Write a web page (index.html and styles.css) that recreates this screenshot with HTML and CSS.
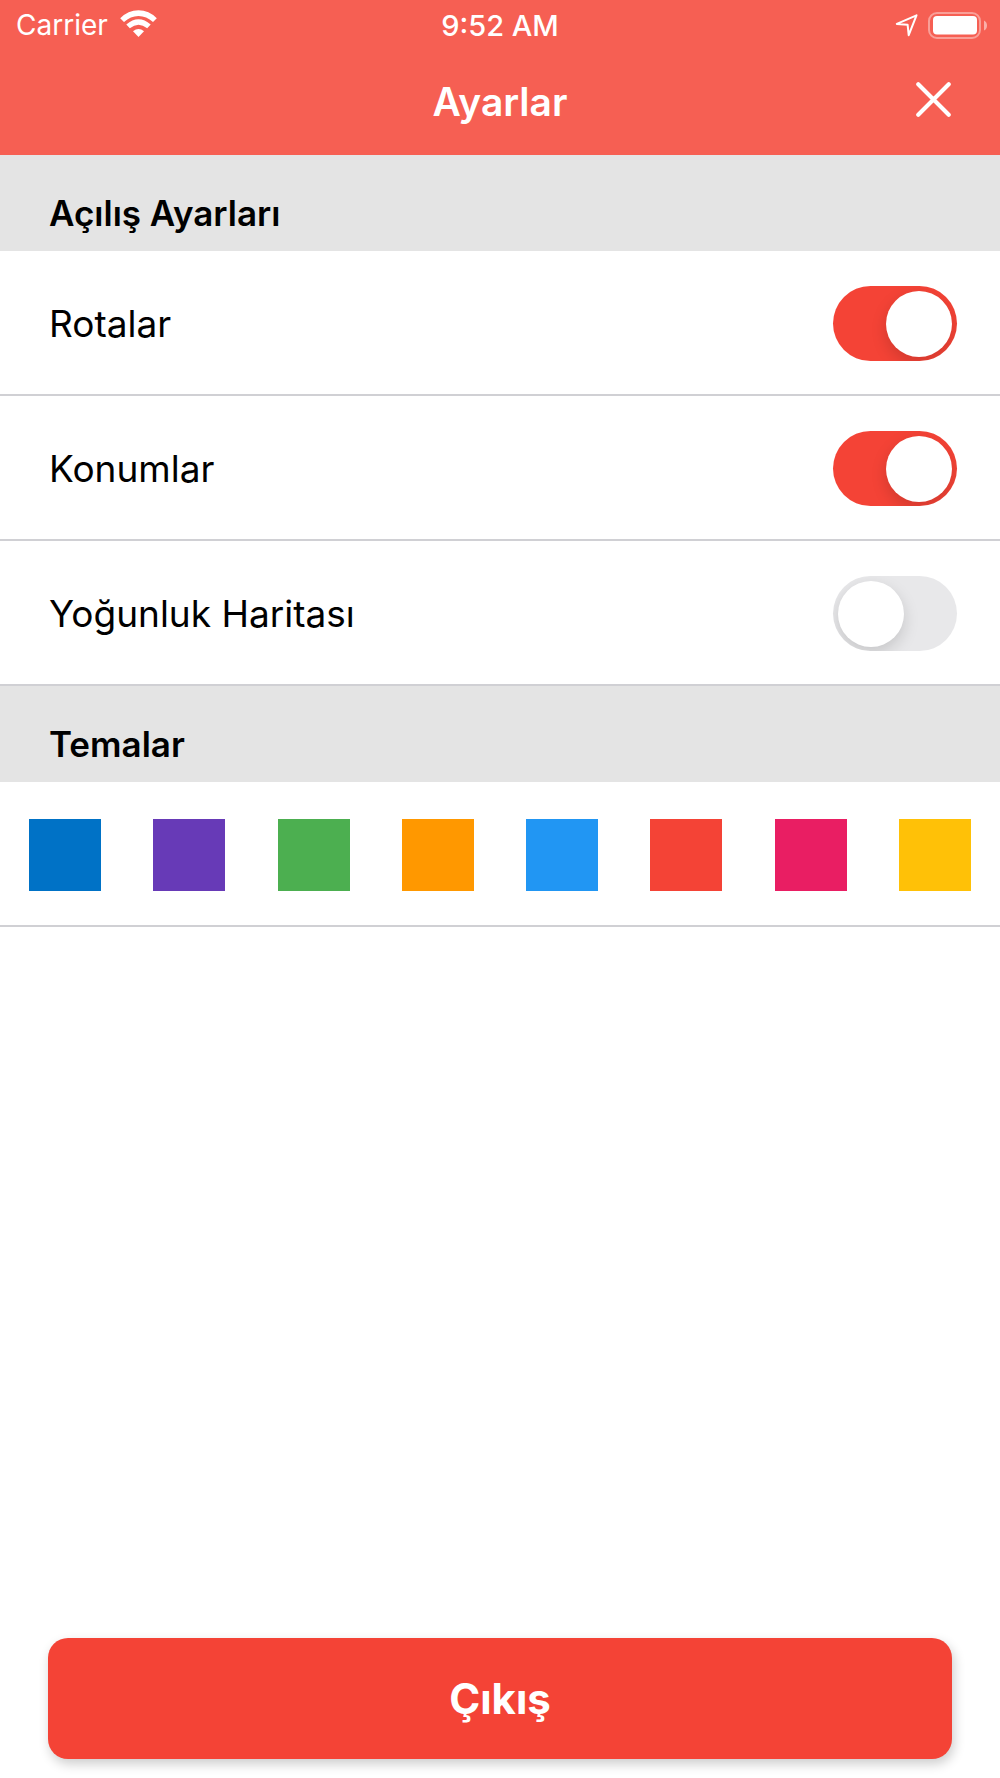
FILE: index.html
```html
<!DOCTYPE html>
<html lang="tr">
<head>
<meta charset="utf-8">
<meta name="viewport" content="width=device-width, initial-scale=1">
<title>Ayarlar</title>
<link rel="stylesheet" href="styles.css">
</head>
<body>
<div class="screen">
  <header class="header">
    <div class="status">
      <div class="status-left">
        <span>Carrier</span>
        <svg class="wifi" viewBox="0 0 37 27" aria-hidden="true">
          <path d="M18.5 27 L13 21.2 Q18.500 17 24 21.2 Z"/>
          <path d="M6.300 14.600 Q18.500 3.800 30.700 14.600 L27.200 18.200 Q18.500 11.200 9.800 18.200 Z"/>
          <path d="M0.200 8.200 Q8 0.200 18.500 0.200 Q29 0.200 36.800 8.200 L33 12 Q26.500 5.900 18.500 5.900 Q10.500 5.900 4 12 Z"/>
        </svg>
      </div>
      <span class="time">9:52 AM</span>
      <div class="status-right">
        <svg class="location" viewBox="0 0 24 24" aria-hidden="true">
          <path d="M21.500 2.300 L1.800 10.900 L12.600 11.700 L13.700 22.200 Z"/>
        </svg>
        <svg class="battery" viewBox="0 0 60 27" aria-hidden="true">
          <rect class="battery-case" x="1" y="1" width="51" height="25" rx="8"/>
          <rect x="5" y="4" width="44" height="18.500" rx="4"/>
          <path class="battery-tip" d="M56 8.500 Q59 10 59 13.500 Q59 17 56 18.500 Z"/>
        </svg>
      </div>
    </div>
    <div class="nav">
      <h1 class="title">Ayarlar</h1>
      <button class="close" type="button" aria-label="Kapat">
        <svg class="close-icon" viewBox="0 0 34 34" aria-hidden="true"><path d="M2.200 2.200 L31.800 31.800 M31.800 2.200 L2.200 31.800"/></svg>
      </button>
    </div>
  </header>
  <main class="content">
    <h2 class="section">Açılış Ayarları</h2>
    <label class="row">Rotalar<input class="switch" type="checkbox" role="switch" checked></label>
    <label class="row">Konumlar<input class="switch" type="checkbox" role="switch" checked></label>
    <label class="row">Yoğunluk Haritası<input class="switch" type="checkbox" role="switch"></label>
    <h2 class="section" id="themes">Temalar</h2>
    <div class="themes" role="radiogroup" aria-labelledby="themes">
      <input class="swatch blue" type="radio" name="theme" aria-label="Mavi">
      <input class="swatch purple" type="radio" name="theme" aria-label="Mor">
      <input class="swatch green" type="radio" name="theme" aria-label="Yeşil">
      <input class="swatch orange" type="radio" name="theme" aria-label="Turuncu">
      <input class="swatch sky" type="radio" name="theme" aria-label="Açık mavi">
      <input class="swatch red" type="radio" name="theme" aria-label="Kırmızı" checked>
      <input class="swatch pink" type="radio" name="theme" aria-label="Pembe">
      <input class="swatch amber" type="radio" name="theme" aria-label="Sarı">
    </div>
  </main>
  <footer class="footer">
    <button class="logout" type="button">Çıkış</button>
  </footer>
</div>
</body>
</html>
```
FILE: styles.css
```css
* {
  box-sizing: border-box;
}

body {
  margin: 0;
  background: #fff;
  color: #000;
  font-family: Inter, "Liberation Sans", sans-serif;
}

.screen {
  display: flex;
  flex-direction: column;
  min-height: 100vh;
}

.header {
  background: #f65f53;
  color: #fff;
}

.status {
  display: grid;
  grid-template-columns: 1fr auto 1fr;
  align-items: center;
  height: 50px;
  padding: 0 12px;
  font-size: 28px;
}

.status-left,
.status-right {
  display: flex;
  align-items: center;
  gap: 12px;
}

.status-left {
  padding-left: 4px;
}

.status-right {
  justify-content: flex-end;
  gap: 9px;
}

.time {
  font-size: 29px;
  font-weight: 500;
}

.wifi {
  width: 37px;
  height: 27px;
  margin-bottom: 3px;
  fill: #fff;
}

.location {
  width: 24px;
  height: 24px;
  fill: none;
  stroke: #fff;
  stroke-width: 2;
  stroke-linejoin: round;
}

.battery {
  width: 60px;
  height: 27px;
  fill: #fff;
}

.battery-case {
  fill: none;
  stroke: #fff;
  stroke-width: 2;
  opacity: 0.4;
}

.battery-tip {
  opacity: 0.5;
}

.nav {
  display: grid;
  grid-template-columns: 1fr auto 1fr;
  align-items: center;
  height: 105px;
  padding: 0 40px 2px;
}

.title {
  grid-column: 2;
  margin: 0;
  font-size: 39px;
  font-weight: 600;
}

.close {
  display: flex;
  justify-self: end;
  padding: 8px 9px 12px;
  border: 0;
  background: none;
}

.close-icon {
  width: 35px;
  height: 35px;
  fill: none;
  stroke: #fff;
  stroke-width: 4;
  stroke-linecap: round;
}

.section {
  display: flex;
  align-items: center;
  height: 96px;
  margin: 0;
  padding: 20px 49px 0;
  background: #e4e4e4;
  font-size: 35px;
  font-weight: 600;
}

.row {
  display: flex;
  align-items: center;
  justify-content: space-between;
  height: 145px;
  padding: 2px 43px 0 49px;
  border-bottom: 2px solid #d0d0d4;
  font-size: 37px;
}

.switch {
  display: flex;
  width: 124px;
  height: 75px;
  margin: 0;
  padding: 5px;
  border-radius: 38px;
  overflow: hidden;
  background: #e8e8ea;
  appearance: none;
}

.switch::before {
  content: "";
  width: 66px;
  height: 66px;
  border-radius: 50%;
  background: #fff;
  box-shadow: 0 6px 16px rgba(0, 0, 0, 0.15);
}

.switch:checked {
  justify-content: flex-end;
  background: #f44336;
}

.themes {
  display: flex;
  align-items: center;
  justify-content: space-between;
  height: 145px;
  padding: 2px 29px 0;
  border-bottom: 2px solid #d0d0d4;
}

.swatch {
  width: 72px;
  height: 72px;
  margin: 0;
  appearance: none;
}

.blue { background: #0072c6; }
.purple { background: #673ab7; }
.green { background: #4caf50; }
.orange { background: #ff9800; }
.sky { background: #2196f3; }
.red { background: #f44336; }
.pink { background: #e91e63; }
.amber { background: #ffc107; }

.footer {
  display: flex;
  margin-top: auto;
  padding: 19px 48px;
}

.logout {
  flex: 1;
  height: 121px;
  border: 0;
  border-radius: 20px;
  background: #f44336;
  box-shadow: 2px 5px 12px rgba(0, 0, 0, 0.2);
  color: #fff;
  font-family: inherit;
  font-size: 42px;
  font-weight: 700;
}
```
